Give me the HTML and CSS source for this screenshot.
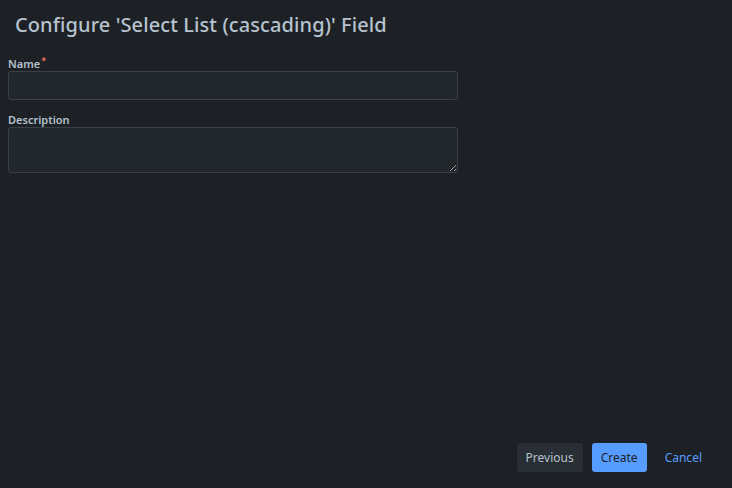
FILE: index.html
```
<!DOCTYPE html>
<html>
<head>
<meta charset="utf-8">
<link rel="stylesheet" href="styles.css">
</head>
<body>
<div class="dialog">
  <header class="header">
    <h1 class="title">Configure 'Select List (cascading)' Field</h1>
  </header>
  <form class="form">
    <div class="field">
      <label class="label">Name<span class="req">*</span></label>
      <input class="input" type="text">
    </div>
    <div class="field">
      <label class="label">Description</label>
      <textarea class="textarea"></textarea>
    </div>
  </form>
  <footer class="footer">
    <button class="btn btn-sub" type="button">Previous</button>
    <button class="btn btn-primary" type="button">Create</button>
    <button class="btn btn-link" type="button">Cancel</button>
  </footer>
</div>
</body>
</html>
```
FILE: styles.css
```
html, body {
  margin: 0;
  padding: 0;
  background: #1d2125;
  height: 100%;
}
body {
  font-family: "Noto Sans", "Open Sans", sans-serif;
  color: #b6c2cf;
}
.dialog {
  height: 488px;
  display: flex;
  flex-direction: column;
  box-sizing: border-box;
}
.header {
  padding: 11px 15px 0;
  height: 39px;
  box-sizing: border-box;
}
.title {
  margin: 0;
  font-size: 20px;
  font-weight: 500;
  line-height: 28px;
  letter-spacing: 0.1px;
  color: #b6c2cf;
}
.form {
  flex: 1;
  padding: 18px 8px 0;
  display: flex;
  flex-direction: column;
  gap: 13px;
}
.field {
  display: flex;
  flex-direction: column;
  width: 450px;
}
.label {
  font-size: 11px;
  font-weight: 600;
  line-height: 14px;
  color: #b6c2cf;
}
.req {
  color: #f87168;
  font-size: 9px;
  vertical-align: top;
  line-height: 8px;
  margin-left: 1px;
}
.input, .textarea {
  box-sizing: border-box;
  width: 450px;
  background: #22272b;
  border: 1px solid #38414a;
  border-radius: 3px;
  color: #b6c2cf;
  font-family: inherit;
  outline: none;
  margin: 0;
}
.input { height: 29px; }
.textarea { height: 46px; resize: vertical; display: block; }
.footer {
  display: flex;
  justify-content: flex-end;
  align-items: center;
  padding: 0 21px 16px 0;
  gap: 9px;
}
.btn {
  font-family: inherit;
  font-size: 12px;
  height: 29px;
  border: none;
  border-radius: 3px;
  padding: 0 9px;
  cursor: pointer;
}
.btn-sub {
  background: #282e33;
  color: #b6c2cf;
}
.btn-primary {
  background: #579dff;
  color: #1d2125;
}
.btn-link {
  background: transparent;
  color: #579dff;
}
```
